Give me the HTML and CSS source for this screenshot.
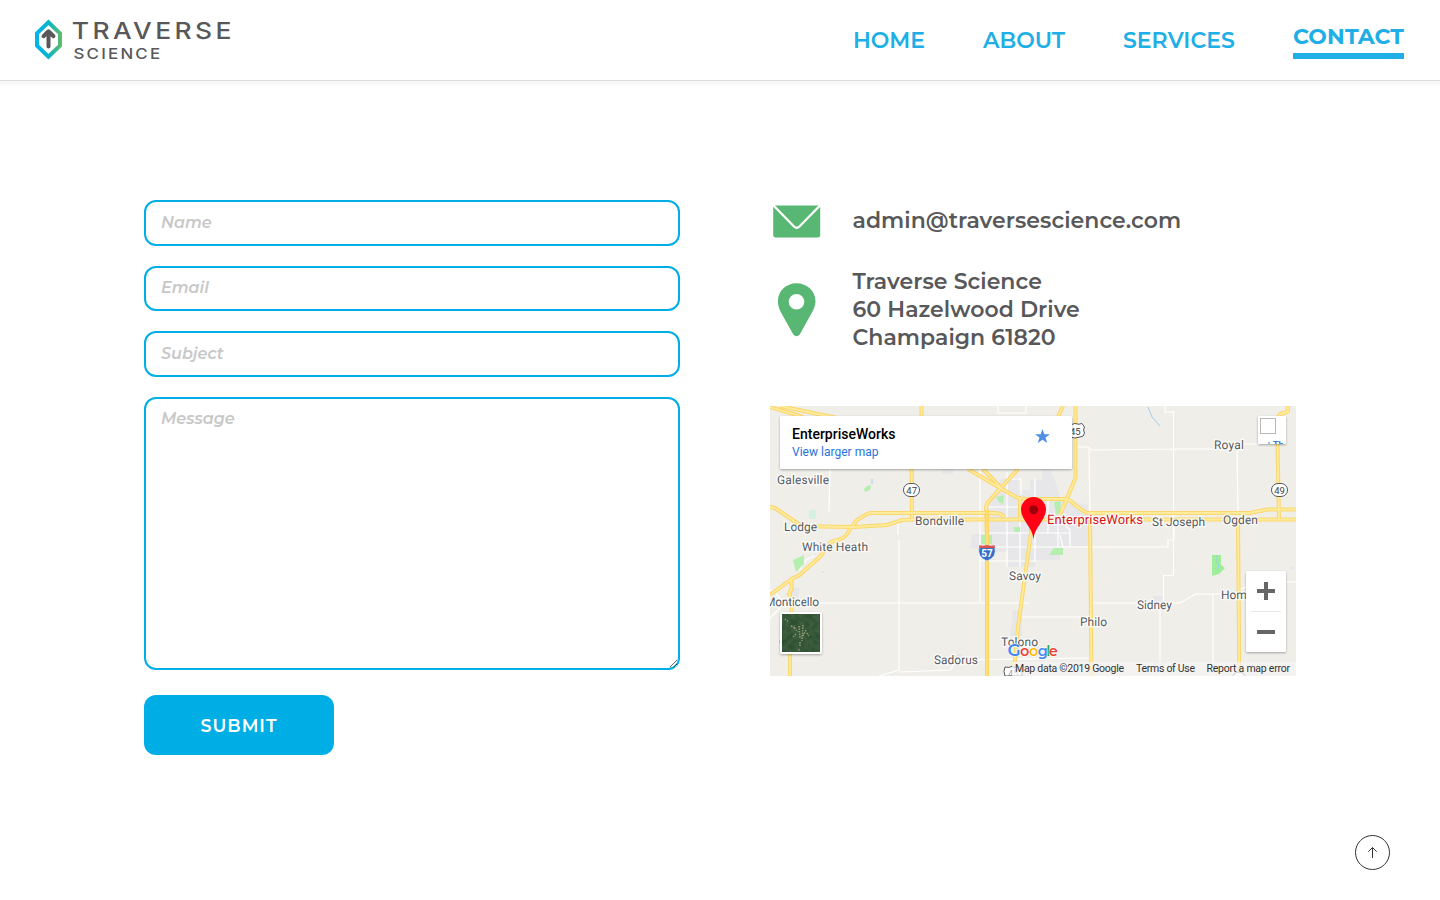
FILE: index.html
```html
<!DOCTYPE html>
<html lang="en">
<head>
<meta charset="utf-8">
<title>Contact | Traverse Science</title>
<link rel="stylesheet" href="styles.css">
</head>
<body>
<header class="header">
  <a class="brand" href="#">
    <svg class="logo" viewBox="0 0 210 52" width="210" height="52" role="img" aria-label="Traverse Science">
      <defs><linearGradient id="hex" x1="0" y1="0" x2="1" y2="0"><stop offset=".15" stop-color="#00b4e6"/><stop offset=".55" stop-color="#0bb5c4"/><stop offset="1" stop-color="#5cba6e"/></linearGradient></defs>
      <path d="M18.400 12.200 30 23.300V35.700L18.400 46.800 7 35.700V23.300Z" fill="none" stroke="url(#hex)" stroke-width="4"/>
      <path d="M18.500 36.500V22.500M13.500 26.200 18.500 21.300 23.500 26.200" fill="none" stroke="#58585a" stroke-width="4" stroke-linecap="round" stroke-linejoin="round"/>
      <text class="logo-main" x="41.800" y="29" textLength="163" lengthAdjust="spacingAndGlyphs">TRAVERSE</text>
      <text class="logo-sub" x="43.400" y="49" textLength="89" lengthAdjust="spacingAndGlyphs">SCIENCE</text>
    </svg>
  </a>
  <nav class="nav">
    <a class="nav-link home" href="#">HOME</a>
    <a class="nav-link about" href="#">ABOUT</a>
    <a class="nav-link services" href="#">SERVICES</a>
    <a class="nav-link active" href="#">CONTACT</a>
  </nav>
</header>
<main class="content">
  <form class="form">
    <input class="field" type="text" placeholder="Name">
    <input class="field email" type="email" placeholder="Email">
    <input class="field" type="text" placeholder="Subject">
    <textarea class="field message" placeholder="Message"></textarea>
    <button class="submit" type="button">SUBMIT</button>
  </form>
  <section class="info">
    <div class="row mail">
      <svg width="54" height="36" viewBox="0 0 54 36"><rect x="3.200" y="1.600" width="47" height="32" rx="2.500" fill="#58b873"/><path d="M3.500 1.500 24 22.500Q26.700 25 29.400 22.500L50 1.500" fill="none" stroke="#fff" stroke-width="2.300"/></svg>
      <span class="mail-text">admin@traversescience.com</span>
    </div>
    <div class="row address">
      <svg width="54" height="54" viewBox="0 0 54 54"><path fill="#58b873" fill-rule="evenodd" d="M26.500.2C16 .2 7.900 8 7.900 18.200c0 4 1.300 8 3.400 11.800l12 21.500q3.200 3.600 6.400 0l12-21.500c2.100-3.800 3.800-7.800 3.800-11.800C45.500 8 37 .2 26.500.2ZM26.500 11a7.800 7.800 0 1 1 0 15.600 7.800 7.800 0 0 1 0-15.600Z"/></svg>
      <div class="address-text"><div class="line1">Traverse Science</div><div class="line2">60 Hazelwood Drive</div><div class="line3">Champaign 61820</div></div>
    </div>
    <svg class="map" viewBox="770 406 526 270" width="526" height="270">
      <defs>
        <filter id="sh" x="-20%" y="-20%" width="140%" height="150%"><feDropShadow dx="0" dy="1" stdDeviation="1.3" flood-opacity=".32"/></filter>
        <filter id="ground" x="0" y="0" width="100%" height="100%" color-interpolation-filters="sRGB"><feTurbulence type="fractalNoise" baseFrequency=".2" numOctaves="3" seed="4"/><feColorMatrix values=".16 0 0 0 .13  .12 0 0 0 .28  .12 0 0 0 .16  0 0 0 0 1"/></filter>
        <g id="roads">
          <path d="M770 407 803 417M780 406 837 418M968 469 1000 488 1016 497Q1021 499 1030 499H1063Q1070 499 1074 504L1083 511Q1086 513 1090 513H1250L1267 509.500H1296"/>
          <path d="M1063 406 1058 417M1018 469 989 501Q986 504 986 510L987 540V676M983 469 1001 488"/>
          <path d="M770 507 775 508 797 523Q800 525 806 526.500H820L853 527 887 525 902 520 915 519.500H1296"/>
          <path d="M770 595 793 578Q800 576 805 570L820 557 829 544Q831 541 838 540 846 538 850 529L857 520 867 514Q869 513 873 513H993Q1002 513 1004 517"/>
          <path d="M921.500 406V417M911.700 469 912 519M1075.500 406V478L1060 515M1020 499V519"/>
          <path d="M791 578 792 588 789 594 793 601 790 622V676M1033 510 1031 533 1018 627 1015 660 1011 676M1090 520 1091.500 676M1238 520 1239.300 676M1288 406V411Q1286 413 1281 413.500L1277 418 1279 520"/>
        </g>
      </defs>
      <rect x="770" y="406" width="526" height="270" fill="#f0eee9"/>
      <path fill="#e7e7e9" d="M986 512 1000 479 1018 477 1019 490 1030 490 1030 480H1042V470H1050L1055 480 1060 498 1088 505V546H1060V560H1035V567H1008V552H994V560H985L982 550 970 548 972 535 985 531ZM1040 454H1053V470H1040ZM789 588H800L797 603H788ZM1013 610H1022V636H1010ZM958 654H962V658H954ZM1153 596H1164V608H1155ZM942 469H953V474H942Z"/>
      <g fill="none" stroke="#fff" stroke-width="1.200">
        <path d="M830 469 829 512M898 535V519M899 540V670L879 676M899 672 951 670 955 660 1090 658M800 603H1030M1022 617H1090M980 469V602M998 406V413H1026V406M1007 472V567M1020 499V567M1035 478V562M1048 499V534M1058 525V547M1070 547V530L1065 525M980 533H1070M986 547H1168V540H1174V510M986 507H1030M1006 479H1021V495M980 561H1035M1076 447H1088L1091 450 1173 449M1165 406V412H1173.500V520M1089 450 1090 513M1173 449H1213L1216 446 1228 444H1260M1237 445 1238 513M1173.500 520V575.500H1163.500V603M1093 603H1180L1196 594H1245M1160 603V676M1213 594V676M1239 590 1257 582H1296M770 590Q780 594 783 605L770 618M799 570 806 560 814 556M1063 547 1060 535"/>
      </g>
      <g fill="#b5efaf"><path d="M864 489 867 486 871 485 870 490 865 492ZM793 560 804 555 804 564 796 572ZM996 497 1004 495 1003 504 999 502ZM1054 502 1061 501 1060 512 1056 515ZM1054 548H1063V555H1049ZM1014 527H1020V532H1014Z"/><path d="M809 510H816V519H809Z" fill="#d4f0df"/><path d="M981 535H985V544H981ZM989 535H992V544H989Z"/></g>
      <path d="M1212 555H1221V565L1225 568 1219 574 1212 576Z" fill="#a0ed9a"/>
      <path d="M1217 555V562L1219 566 1217 571M1148 407 1152 417 1160 426M872 484V479M1292 568H1293M931 417V418M822 572H823" fill="none" stroke="#9dcff2" stroke-width="1"/>
      <use href="#roads" fill="none" stroke="#fbd76c" stroke-width="4"/>
      <use href="#roads" fill="none" stroke="#ffeb9c" stroke-width="1.800"/>
      <path d="M987 510V676" stroke="#fcd563" stroke-width="4"/><path d="M987 510V676" stroke="#ffe794" stroke-width="1"/>
      <g class="shield">
        <rect x="903.500" y="483.500" width="16" height="13" rx="6.500"/><text x="906.300" y="493.500">47</text>
        <rect x="1271.500" y="483.500" width="16" height="13" rx="6.500"/><text x="1274.200" y="493.500">49</text>
        <path d="M1069 424Q1072 425 1075 423.500 1079 425 1082 423.500L1084.500 427Q1082.500 430 1084.500 433 1084 437 1080 437L1075 438 1070 437H1067V427Z"/><text x="1070" y="434.500">45</text>
        <path d="M1005 667Q1009 668 1012 666.500 1016 668 1019 666.500L1022 670V676H1005Q1003 671 1005 667Z"/><text x="1008" y="676.500" opacity=".5">45</text>
        <circle cx="1239" cy="679" r="7"/>
      </g>
      <path d="M979.500 546Q982 547.500 987 545.500 992 547.500 994.500 546 998 557 987 561 976 557 979.500 546Z" fill="#376fc6" stroke="#fff" stroke-width=".7"/><path d="M979.500 545Q982 546.500 987 545 992 546.500 994.500 545L995 548H979Z" fill="#dc5350"/><text class="interstate" x="981.300" y="557">57</text>
      <g class="places">
        <text x="777" y="483.500" textLength="52">Galesville</text><text x="784" y="530.500" textLength="33">Lodge</text><text x="802" y="550.500" textLength="66">White Heath</text><text x="915" y="524.500" textLength="49">Bondville</text><text x="1152" y="525.500" textLength="53">St Joseph</text><text x="1223" y="523.500" textLength="35">Ogden</text><text x="1214" y="448.500" textLength="30">Royal</text><text x="1009" y="579.500" textLength="32">Savoy</text><text x="1137" y="608.500" textLength="35">Sidney</text><text x="1080" y="625.500" textLength="27">Philo</text><text x="1001" y="645.500" textLength="37">Tolono</text><text x="934" y="663.500" textLength="44">Sadorus</text><text x="765" y="605.500" textLength="54">Monticello</text><text x="1221" y="598.500" textLength="36">Homer</text><text x="779" y="646">C</text>
        <text class="works" x="1047" y="523.500" textLength="96">EnterpriseWorks</text>
      </g>
      <path d="M1033.500 539C1032.500 527 1021 520 1021 509.500a12.500 12.500 0 0 1 25 0C1046 520 1034.500 527 1033.500 539Z" fill="#ff0014"/><circle cx="1033.500" cy="509.700" r="4.500" fill="#9c000c"/>
      <rect x="780" y="416" width="292" height="53" rx="1.500" fill="#fff" filter="url(#sh)"/>
      <text class="card-title" x="792" y="438.800" textLength="103.500">EnterpriseWorks</text><text class="card-link" x="792" y="456" textLength="86.500">View larger map</text>
      <path d="M1042.500 429 1044.300 434.200H1050L1045.500 437.500 1047.200 443 1042.500 439.700 1037.800 443 1039.500 437.500 1035 434.200H1040.700Z" fill="#4d90e8"/>
      <rect x="1258" y="416" width="28" height="28" rx="1" fill="#fff" filter="url(#sh)"/><rect x="1260.500" y="418.500" width="15" height="15" fill="#fff" stroke="#b8b8b8"/>
      <svg x="1266" y="441" width="18" height="3" viewBox="0 0 18 3"><text class="clip-text" x="7" y="7">Th</text><path d="M2 2H4" stroke="#3c78d8"/></svg>
      <rect x="780" y="612" width="42" height="42" rx="2" fill="#fff" filter="url(#sh)"/><rect x="782" y="614" width="38" height="38" filter="url(#ground)"/>
      <path d="M794 628 798 632M799 626 800 638M803 625 802 641M806 630 803 636M796 634 793 637M807 633 809 636M800 642V646M791 626 796 628M785 619 789 622M799 649V651" fill="none" stroke="#b3b08a" stroke-width="1.500" stroke-dasharray="1.500 1" opacity=".75"/>
      <rect x="1246" y="571" width="40" height="81" rx="1.500" fill="#fff" filter="url(#sh)"/><path d="M1251 611.500H1281" stroke="#e6e6e6"/><path d="M1257 591H1275M1266 582V600M1257 632H1275" stroke="#666" stroke-width="4"/>
      <text class="google" y="655.500"><tspan x="1007.500" fill="#4285f4" class="cap">G</tspan><tspan x="1020" fill="#ea4335">o</tspan><tspan x="1029" fill="#fbbc05">o</tspan><tspan x="1037.800" fill="#4285f4">g</tspan><tspan x="1046.200" fill="#34a853">l</tspan><tspan x="1048.700" fill="#ea4335">e</tspan></text>
      <rect x="1012" y="662" width="284" height="14" fill="#f5f5f5" opacity=".72"/>
      <g class="legal"><text x="1015" y="672" textLength="109">Map data ©2019 Google</text><text x="1136" y="672" textLength="59">Terms of Use</text><text x="1206.500" y="672" textLength="83.500">Report a map error</text></g>
    </svg>
  </section>
</main>
<a class="top" href="#" aria-label="Back to top"><svg width="35" height="35" viewBox="0 0 35 35" fill="none" stroke="#333"><circle cx="17.500" cy="17.500" r="17"/><path d="M17.500 23V12.500M13.300 16.700 17.500 12.500 21.700 16.700"/></svg></a>
</body>
</html>
```
FILE: styles.css
```css
* { box-sizing: border-box; }
body { margin: 0; height: 900px; background: #fff; font-family: "Montserrat", Inter, sans-serif; overflow: hidden; }
a { text-decoration: none; }
.header { height: 81px; border-bottom: 1px solid #dcdcdc; box-shadow: 0 4px 0 #f8f8f8; display: flex; justify-content: space-between; align-items: flex-start; padding: 0 36px 0 30px; }
.brand { display: block; padding-top: 10px; }
.logo { display: block; }
.logo-main, .logo-sub { font-family: Inter, sans-serif; fill: #58585a; }
.logo-main { font-size: 23.500px; font-weight: 500; letter-spacing: 3px; }
.logo-sub { font-size: 15px; font-weight: 500; letter-spacing: 2px; }
.nav { display: flex; gap: 58px; padding-top: 21px; }
.nav-link { height: 38px; padding-top: 5px; font-size: 22px; line-height: 30px; font-weight: 600; color: #20aee6; white-space: nowrap; }
.home { width: 72px; }
.about { width: 82px; }
.services { width: 112px; }
.active { width: 111px; padding-top: 1px; font-weight: 700; letter-spacing: .1px; border-bottom: 6px solid #20aee6; }
.content { display: flex; gap: 90px; padding: 119px 144px 0; }
.form { width: 536px; display: flex; flex-direction: column; gap: 20px; }
.field { width: 100%; height: 45.500px; border: 2px solid #00aee6; border-radius: 12px; padding: 0 15px; background: #fff; font: italic 600 16px "Montserrat", Inter, sans-serif; outline: 0; }
.field::placeholder { color: #c8c8c8; opacity: 1; }
.email { padding-bottom: 1px; }
.message { height: 273px; padding-top: 10px; resize: both; }
.submit { width: 190px; height: 60px; margin-top: 5px; padding: 2px 0 0; border: 0; border-radius: 12px; background: #00aee6; color: #fff; font: 600 17.500px "Montserrat", Inter, sans-serif; letter-spacing: 1px; }
.info { width: 526px; color: #58585a; font-size: 22px; font-weight: 600; letter-spacing: .04px; }
.row { display: flex; align-items: center; gap: 28.500px; }
.mail { height: 40px; padding-top: 4px; }
.mail-text { line-height: 36px; margin-top: -2px; white-space: nowrap; }
.address { margin-top: 28px; height: 84px; }
.address-text { line-height: 28px; white-space: nowrap; }
.map { display: block; margin-top: 54px; font-family: Roboto, sans-serif; font-weight: 400; letter-spacing: 0; }
.places { font-size: 12px; fill: #55595f; stroke: #fff; stroke-width: 2.500px; paint-order: stroke; stroke-opacity: .8; text-rendering: geometricPrecision; }
.works { font-size: 13px; fill: #d3131c; }
.shield { font-size: 9.500px; fill: #fff; stroke: #55585c; }
.shield text { fill: #444; stroke: none; }
.interstate { font-size: 10px; font-weight: 700; fill: #fff; }
.card-title { font-size: 14px; font-weight: 500; fill: #000; }
.card-link { font-size: 12px; fill: #2874dd; }
.clip-text { font-size: 9px; font-weight: 700; fill: #3c78d8; }
.google { font-size: 14.500px; font-weight: 600; font-family: "Montserrat", Lato, sans-serif; stroke: #fff; stroke-width: 1px; paint-order: stroke; }
.cap { font-size: 17px; }
.legal { font-size: 10.500px; fill: #333; }
.top { position: fixed; right: 50px; bottom: 30px; display: block; height: 35px; }
```
